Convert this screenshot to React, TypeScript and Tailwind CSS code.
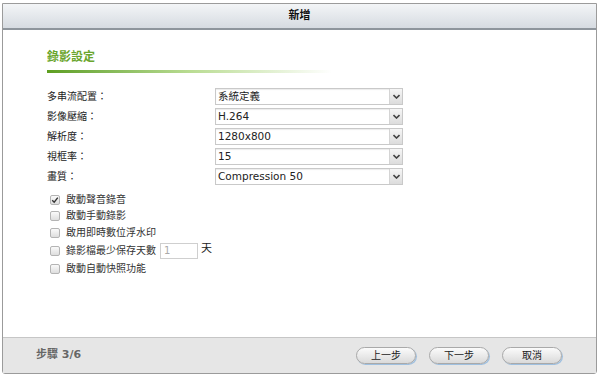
import React from "react"

const cjk = "font-['DejaVu_Sans','Noto_Sans_CJK_TC',sans-serif]"

const fields = [
  { label: "多串流配置：", value: "系統定義" },
  { label: "影像壓縮：", value: "H.264" },
  { label: "解析度：", value: "1280x800" },
  { label: "視框率：", value: "15" },
  { label: "畫質：", value: "Compression 50" },
]

function Select({ value }: { value: string }) {
  return (
    <div className="flex h-[17px] w-[188px] border border-[#c9c9c9] bg-white shadow-[inset_0_1px_1px_rgba(0,0,0,0.08)]">
      <div className="flex flex-1 items-center pl-[2px] text-[10.5px] leading-none text-[#222]">{value}</div>
      <div className="flex w-[13px] items-center justify-center border-l border-[#d4d4d4] bg-gradient-to-b from-[#f6f6f6] to-[#dcdcdc]">
        <svg width="7" height="5" viewBox="0 0 7 5">
          <path d="M0.5 1 L3.5 4 L6.5 1" fill="none" stroke="#444" strokeWidth="1.6" />
        </svg>
      </div>
    </div>
  )
}

function Check({ checked }: { checked?: boolean }) {
  return (
    <span className="flex h-[10px] w-[10px] items-center justify-center rounded-[2px] border border-[#b4b4b4] bg-gradient-to-b from-[#fafafa] to-[#dedede]">
      {checked && (
        <svg width="8" height="8" viewBox="0 0 8 8">
          <path d="M1.2 4.2 L3.2 6.2 L6.8 1.6" fill="none" stroke="#333" strokeWidth="1.4" />
        </svg>
      )}
    </span>
  )
}

function Button({ children }: { children: React.ReactNode }) {
  return (
    <button className="flex h-[17px] w-[60px] items-center justify-center rounded-full border border-[#a9a9a9] bg-gradient-to-b from-[#fbfbfb] to-[#dadada] text-[10px] leading-none text-[#222] shadow-[1px_1px_0_#9fc0e0]">
      {children}
    </button>
  )
}

export default function App() {
  return (
    <div className={`h-[376px] w-[600px] bg-white pl-[2px] pt-[3px] ${cjk}`}>
      <div className="flex h-[371px] w-[595px] flex-col rounded-b-[3px] border border-[#9b9b9b]">
        <div className="flex h-[26px] items-center justify-center border-b-2 border-[#8e959c] bg-gradient-to-b from-[#f3f5f7] to-[#d6dbe1] text-[11px] font-bold text-[#111]">
          新增
        </div>

        <div className="flex-1 pl-[44px] pt-[21px]">
          <div className="text-[12px] font-bold leading-none text-[#6aa52c]">錄影設定</div>
          <div className="mt-[7px] h-[3px] w-[285px] bg-gradient-to-r from-[#5d9e1e] via-[#b9dc92] to-transparent" />

          <div className="mt-[15px] flex flex-col gap-[3px]">
            {fields.map((f) => (
              <div key={f.label} className="flex items-center">
                <div className="w-[168px] text-[10px] text-[#222]">{f.label}</div>
                <Select value={f.value} />
              </div>
            ))}
          </div>

          <div className="mt-[7px] flex flex-col pl-[3px] text-[10px] leading-none text-[#333]">
            <label className="flex h-[16px] items-center gap-[6px]">
              <Check checked />
              啟動聲音錄音
            </label>
            <label className="flex h-[16px] items-center gap-[6px]">
              <Check />
              啟動手動錄影
            </label>
            <label className="flex h-[17px] items-center gap-[6px]">
              <Check />
              啟用即時數位浮水印
            </label>
            <label className="flex h-[19px] items-center gap-[6px]">
              <Check />
              錄影檔最少保存天數
              <span className="ml-[-2px] flex h-[16px] w-[38px] items-center border border-[#cfcfcf] bg-white pl-[3px] text-[10px] text-[#aaa]">
                1
              </span>
              <span className="-ml-[3px] -mt-[4px] text-[11px] text-[#222]">天</span>
            </label>
            <label className="mt-[1px] flex h-[16px] items-center gap-[6px]">
              <Check />
              啟動自動快照功能
            </label>
          </div>
        </div>

        <div className="flex h-[36px] items-center border-t border-[#c6c6c6] bg-[#e6e6e6] pl-[33px] pr-[34px]">
          <div className="flex-1 text-[11px] font-bold text-[#666]">步驟 3/6</div>
          <div className="flex gap-[13px]">
            <Button>上一步</Button>
            <Button>下一步</Button>
            <Button>取消</Button>
          </div>
        </div>
      </div>
    </div>
  )
}
